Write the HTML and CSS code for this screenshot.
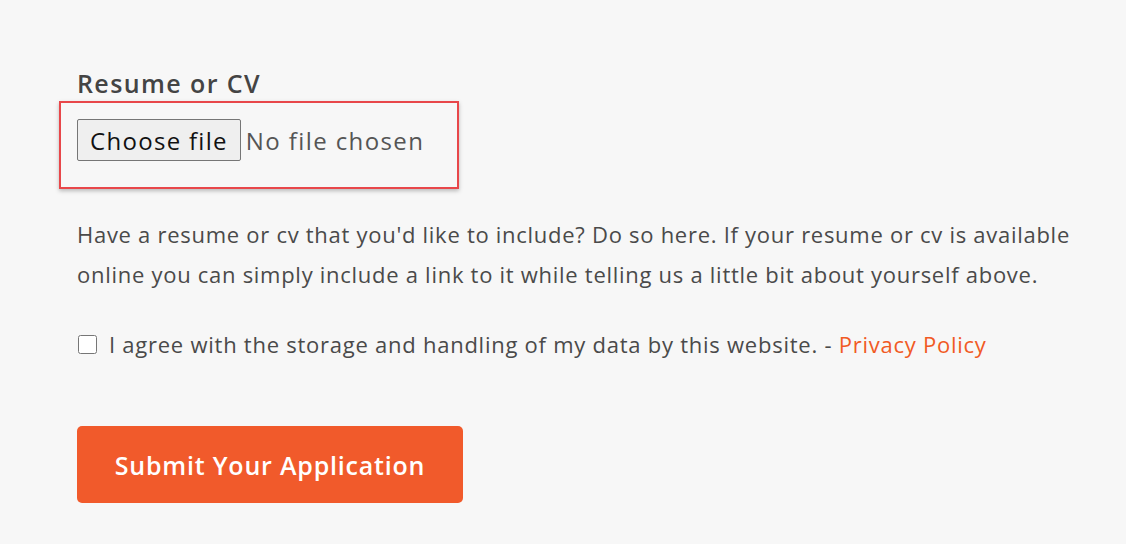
FILE: index.html
```html
<!DOCTYPE html>
<html lang="en">
<head>
    <meta charset="UTF-8">
    <meta name="viewport" content="width=device-width, initial-scale=1.0">
    <title>Apply - Resume or CV</title>
    <link rel="stylesheet" href="styles.css">
</head>
<body>
    <form class="apply-form">
        <label class="field-label" for="resume">Resume or CV</label>
        <div class="upload-box">
            <input type="file" id="resume" name="resume" class="file-input">
            <label class="file-btn" for="resume">Choose file</label>
            <span class="file-name">No file chosen</span>
        </div>

        <p class="hint">Have a resume or cv that you'd like to include? Do so here. If your resume or cv is available online you can simply include a link to it while telling us a little bit about yourself above.</p>

        <label class="consent">
            <input type="checkbox" name="consent">
            <span>I agree with the storage and handling of my data by this website. - <a href="#">Privacy Policy</a></span>
        </label>

        <button type="submit" class="submit-btn">Submit Your Application</button>
    </form>
</body>
</html>
```

FILE: styles.css
```css
body {
    margin: 0;
    background-color: #f7f7f7;
    font-family: "Open Sans", "Liberation Sans", sans-serif;
    color: #4a4a4a;
}
.apply-form {
    display: flex;
    flex-direction: column;
    align-items: flex-start;
    padding: 68px 0 0 77px;
}
.field-label {
    font-size: 25px;
    font-weight: 600;
    letter-spacing: 1.4px;
    line-height: 30px;
    color: #444;
}
.upload-box {
    display: flex;
    align-items: center;
    width: 400px;
    height: 88px;
    margin: 3px 0 0 -18px;
    padding: 16px 16px 26px;
    box-sizing: border-box;
    border: 2px solid #e8474a;
    box-shadow: 0 2px 4px rgba(0,0,0,0.25);
}
.file-input {
    display: none;
}
.file-btn {
    height: 42px;
    box-sizing: border-box;
    padding: 0 12px;
    display: flex;
    align-items: center;
    font-size: 24px;
    letter-spacing: 1.3px;
    color: #111;
    background-color: #efefef;
    border: 1px solid #767676;
    border-radius: 2px;
    cursor: pointer;
}
.file-name {
    margin-left: 5px;
    font-size: 24px;
    letter-spacing: 1.4px;
    color: #555;
}
.hint {
    margin: 25px 0 0;
    max-width: 1000px;
    font-size: 22px;
    letter-spacing: 0.72px;
    line-height: 40px;
}
.consent {
    display: flex;
    align-items: center;
    gap: 12px;
    margin-top: 30px;
    font-size: 22px;
    letter-spacing: 0.75px;
    line-height: 40px;
}
.consent input {
    width: 19px;
    height: 19px;
    margin: 0 0 0 1px;
}
.consent a {
    color: #f15a24;
    text-decoration: none;
}
.submit-btn {
    margin-top: 62px;
    width: 386px;
    height: 77px;
    background-color: #f15a2b;
    color: white;
    border: none;
    border-radius: 5px;
    font-family: inherit;
    font-size: 25px;
    font-weight: 600;
    letter-spacing: 0.8px;
    cursor: pointer;
}
```
